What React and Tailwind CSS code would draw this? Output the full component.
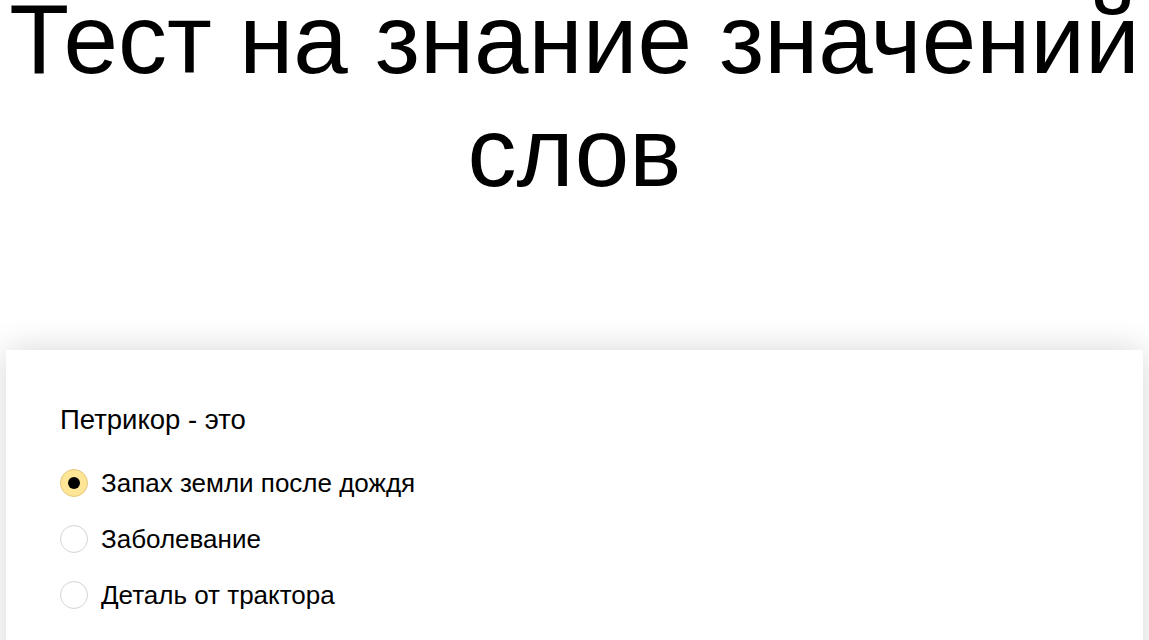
import React, { useState } from 'react';

const options = [
  'Запах земли после дождя',
  'Заболевание',
  'Деталь от трактора',
];

function Radio({ checked }) {
  return (
    <span
      className={
        checked
          ? 'flex h-[28px] w-[28px] shrink-0 items-center justify-center rounded-full border border-[#e3c77c] bg-[#ffe596]'
          : 'flex h-[28px] w-[28px] shrink-0 items-center justify-center rounded-full border border-[#d4d4d4] bg-white'
      }
    >
      {checked && <span className="h-[12px] w-[12px] rounded-full bg-black" />}
    </span>
  );
}

export default function App() {
  const [selected, setSelected] = useState(0);

  return (
    <div className="min-h-[640px] overflow-hidden bg-white text-black" style={{ fontFamily: '"Liberation Sans", Arial, sans-serif' }}>
      <h1 className="mt-[-17px] text-center text-[98px] font-normal leading-[113px]">
        Тест на знание значений слов
      </h1>

      <div className="mx-[6px] mt-[141px] bg-white px-[54px] pt-[54px] pb-[80px] shadow-[0_0_32px_rgba(0,0,0,0.16)]">
        <div className="text-[27.5px] leading-[32px]">Петрикор - это</div>
        <div className="mt-[32px] flex flex-col gap-[26px]">
          {options.map((opt, i) => (
            <label key={i} className="flex h-[30px] cursor-pointer items-center gap-[13px]" onClick={() => setSelected(i)}>
              <Radio checked={selected === i} />
              <span className="text-[26px] leading-[30px]">{opt}</span>
            </label>
          ))}
        </div>
      </div>
    </div>
  );
}
